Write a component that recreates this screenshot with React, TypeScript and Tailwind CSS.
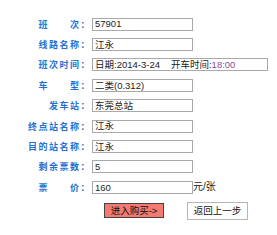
import React from "react";

const rows: { label: string; value?: React.ReactNode; wide?: boolean; suffix?: string }[] = [
  { label: "班\u3000\u3000次：", value: "57901" },
  { label: "线路名称：", value: "江永" },
  {
    label: "班次时间：",
    wide: true,
    value: (
      <>
        日期:2014-3-24<span className="ml-[11px]">开车时间:</span>
        <span className="text-[#8a4c96]">18:00</span>
      </>
    ),
  },
  { label: "车\u3000\u3000型：", value: "二类(0.312)" },
  { label: "发车站：", value: "东莞总站" },
  { label: "终点站名称：", value: "江永" },
  { label: "目的站名称：", value: "江永" },
  { label: "剩余票数：", value: "5" },
  { label: "票\u3000\u3000价：", value: "160", suffix: "元/张" },
];

export default function App() {
  return (
    <div
      className="w-[277px] h-[235px] bg-white overflow-hidden pt-[14px]"
      style={{ fontFamily: '"Liberation Sans", Arial, "Noto Sans CJK SC", sans-serif' }}
    >
      {rows.map((r, i) => (
        <div key={i} className="flex items-center h-[20.4px]">
          <div
            className="w-[91px] text-right text-[9px] font-bold tracking-[1.5px] text-[#2470d2] leading-none whitespace-nowrap"
            style={{ fontFamily: '"Noto Sans CJK SC", sans-serif' }}
          >
            {r.label}
          </div>
          <div
            className={`ml-[1px] h-[13px] border border-[#a9a9a9] flex items-center pl-[2px] text-[9.5px] text-[#222] leading-none whitespace-nowrap ${
              r.wide ? "w-[176px]" : "w-[101px]"
            }`}
          >
            {r.value}
          </div>
          {r.suffix && <span className="text-[10px] text-[#222] leading-none">{r.suffix}</span>}
        </div>
      ))}
      <div className="flex items-center mt-[4px]">
        <button className="ml-[104px] w-[60px] h-[15px] bg-[#f27a70] border border-[#444] text-[9.5px] text-[#111] leading-none flex items-center justify-center">
          进入购买-&gt;
        </button>
        <button className="ml-[23px] w-[61px] h-[18px] bg-white border border-[#b5b5b5] text-[9.5px] text-[#111] leading-none flex items-center justify-center">
          返回上一步
        </button>
      </div>
    </div>
  );
}
